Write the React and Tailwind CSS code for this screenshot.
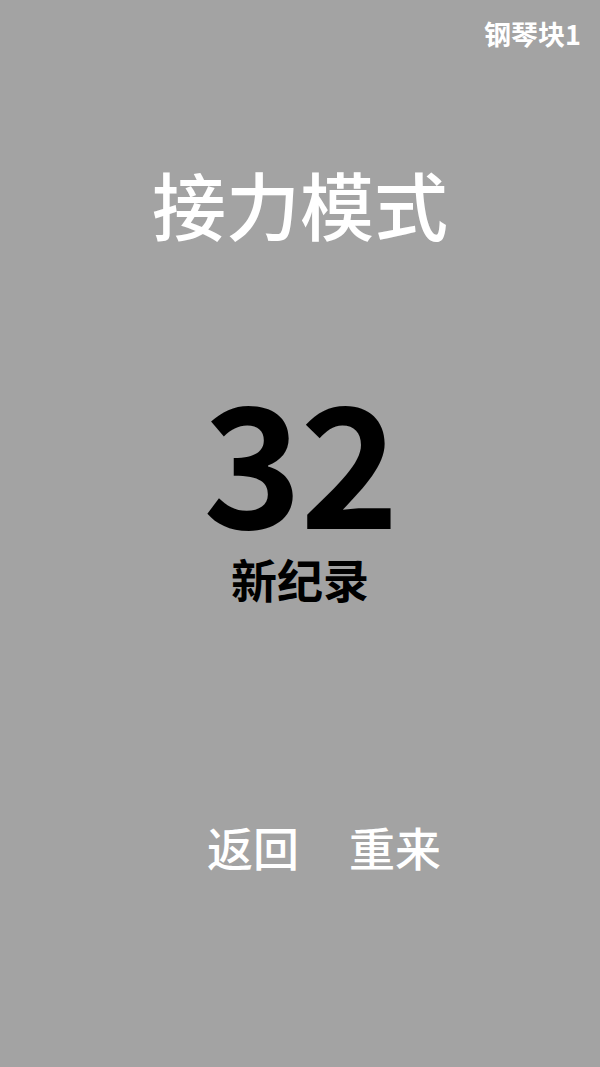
import React from 'react';

const cjk = { fontFamily: '"Noto Sans CJK SC", "Noto Sans", sans-serif' };

export default function App() {
  return (
    <div className="relative w-[600px] h-[1067px] bg-[#a3a3a3] overflow-hidden" style={cjk}>
      {/* game label in the corner */}
      <div className="absolute right-[19px] top-[20px] text-[27px] font-bold text-white leading-none">钢琴块1</div>

      <div className="flex flex-col items-center pt-[166px]">
        <h1 className="text-[74px] font-medium text-white leading-none">接力模式</h1>

        <div className="mt-[149px] text-[168px] font-bold text-black leading-[0.8] tracking-[-2px]">32</div>
        <div className="mt-[32px] text-[46px] font-bold text-black leading-none">新纪录</div>

        <div className="mt-[222px] ml-[48px] flex gap-[50px] text-[46px] font-medium text-white leading-none">
          <button>返回</button>
          <button>重来</button>
        </div>
      </div>
    </div>
  );
}
